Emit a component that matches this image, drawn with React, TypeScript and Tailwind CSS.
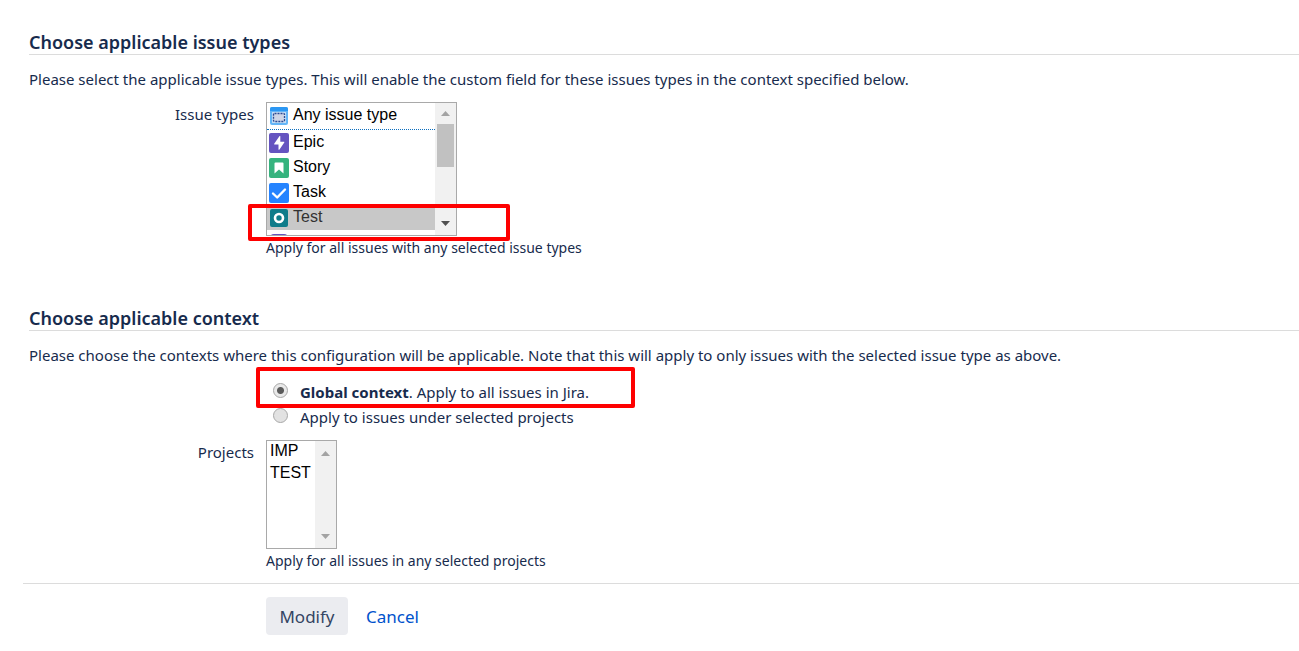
import React from 'react';

const ISSUE_TYPES = [
    { id: 'any', name: 'Any issue type' },
    { id: 'epic', name: 'Epic' },
    { id: 'story', name: 'Story' },
    { id: 'task', name: 'Task' },
    { id: 'test', name: 'Test' },
];

const AnyIcon: React.FC = () => (
    <svg width="18" height="18" viewBox="0 0 18 18">
        <rect width="18" height="18" rx="2" fill="#63b5f7" />
        <path d="M2 0h14a2 2 0 0 1 2 2v2H0V2a2 2 0 0 1 2-2z" fill="#2b97f3" />
        <rect x="2" y="5" width="14" height="11" fill="#c3dcf5" />
        <rect x="3.500" y="6.500" width="11" height="8" rx="1" fill="#cfd5e6" stroke="#2c4a94" strokeWidth="1.300" strokeDasharray="2 1" />
    </svg>
);

const EpicIcon: React.FC = () => (
    <svg width="20" height="20" viewBox="0 0 20 20">
        <rect width="20" height="20" rx="2" fill="#6554c0" />
        <path d="M11.3 3.5v5.2h3.5c.5 0 .7.5.5.8l-5 7.2c-.3.3-.8.2-.8-.3v-4.9H5.7c-.5 0-.7-.5-.5-.8l5.200-7.400c.3-.4.9-.3.9.2z" fill="#fff" />
    </svg>
);

const StoryIcon: React.FC = () => (
    <svg width="20" height="20" viewBox="0 0 20 20">
        <rect width="20" height="20" rx="2" fill="#36b37e" />
        <path d="M6.5 4.500h7a1 1 0 0 1 1 1V15.500L10 11.500 5.500 15.500V5.500a1 1 0 0 1 1-1z" fill="#fff" />
    </svg>
);

const TaskIcon: React.FC = () => (
    <svg width="20" height="20" viewBox="0 0 20 20">
        <rect width="20" height="20" rx="2" fill="#2684ff" />
        <path d="M4 10.500l4.200 4L16 6.500" fill="none" stroke="#fff" strokeWidth="2.400" strokeLinecap="round" strokeLinejoin="round" />
    </svg>
);

const TestIcon: React.FC = () => (
    <svg width="18" height="18" viewBox="0 0 18 18">
        <rect width="18" height="18" rx="2" fill="#0f7c8a" />
        <circle cx="9" cy="9" r="4" fill="none" stroke="#fff" strokeWidth="2.600" />
    </svg>
);

const Arrow: React.FC<{ down?: boolean; color: string }> = ({ down, color }) => (
    <svg width="9" height="5" viewBox="0 0 9 5">
        <path d={down ? 'M0 0h9L4.5 5z' : 'M0 5h9L4.5 0z'} fill={color} />
    </svg>
);

const Section: React.FC<{ title: string; text: string; children: React.ReactNode }> = ({ title, text, children }) => (
    <section className="pl-[6px]">
        <h2 className="border-b border-[#dcdcdc] pt-px text-[18px] leading-[23px] font-semibold">{title}</h2>
        <p className="pt-3 leading-6">{text}</p>
        {children}
    </section>
);

const App: React.FC = () => {
    return (
        <form
            className="bg-white pt-[30px] pb-4 pl-[23px] font-['Noto_Sans','Open_Sans',sans-serif] text-[15px] text-[#172b4d]"
            onSubmit={e => e.preventDefault()}
        >
            <Section
                title="Choose applicable issue types"
                text="Please select the applicable issue types. This will enable the custom field for these issues types in the context specified below."
            >
                <div className="flex items-start gap-3 pt-[11px]">
                    <label htmlFor="issue-types" className="w-[225px] text-right leading-6">Issue types</label>
                    <div>
                        <div className="relative w-[191px]">
                            <div className="flex h-[134px] overflow-hidden border border-[#a9a9a9]">
                                <select
                                    id="issue-types"
                                    multiple
                                    defaultValue={['test']}
                                    className="h-full min-w-0 flex-1 overflow-hidden bg-white p-0 font-['Liberation_Sans',Arial,sans-serif] text-[16px] text-black outline-none [scrollbar-width:none]"
                                >
                                    {ISSUE_TYPES.map(type => (
                                        <option
                                            key={type.id}
                                            value={type.id}
                                            className="h-[25px] pt-[3px] pr-0 pb-0 pl-[26px] first:h-[27px] first:border-b first:border-dotted first:border-[#0b6fc0] checked:bg-[linear-gradient(#c8c8c8,#c8c8c8)] checked:text-[#323232]"
                                        >
                                            {type.name}
                                        </option>
                                    ))}
                                </select>
                                <div className="flex w-[21px] flex-col items-center bg-[#f1f1f1]">
                                    <span className="flex h-[21px] items-center"><Arrow color="#a3a3a3" /></span>
                                    <span className="h-[43px] w-[17px] bg-[#c1c1c1]" />
                                    <span className="mt-auto flex h-6 items-center"><Arrow down color="#505050" /></span>
                                </div>
                            </div>
                            {/* option icons sit over the list's left padding */}
                            <div className="pointer-events-none absolute top-[5px] left-[3px] flex h-[128px] w-5 flex-col items-center overflow-hidden *:shrink-0">
                                <span className="h-[26px]"><AnyIcon /></span>
                                <span className="h-[25px]"><EpicIcon /></span>
                                <span className="h-[25px]"><StoryIcon /></span>
                                <span className="h-[26px]"><TaskIcon /></span>
                                <span className="h-[25px]"><TestIcon /></span>
                                <span className="h-1 w-[18px] rounded-t-sm bg-[#6554c0]" />
                            </div>
                            <div className="pointer-events-none absolute top-[102px] -right-[53px] -left-[18px] h-[37px] rounded-xs border-4 border-[#fe0000]" />
                        </div>
                        <p className="text-[14px] leading-6">Apply for all issues with any selected issue types</p>
                    </div>
                </div>
            </Section>

            <div className="h-[46px]" />

            <Section
                title="Choose applicable context"
                text="Please choose the contexts where this configuration will be applicable. Note that this will apply to only issues with the selected issue type as above."
            >
                <fieldset className="relative ml-[244px] w-max pt-[13px]">
                    <label className="flex h-[25px] items-center gap-3">
                        <input
                            type="radio"
                            name="context"
                            defaultChecked
                            className="-mt-1 size-[15px] appearance-none rounded-full border border-[#a8a8a8] bg-[#e9e9e9] checked:bg-[radial-gradient(circle,#5a5a5a_0_3px,#e9e9e9_4px)]"
                        />
                        <span><b>Global context</b>. Apply to all issues in Jira.</span>
                    </label>
                    <label className="flex h-[25px] items-center gap-3">
                        <input
                            type="radio"
                            name="context"
                            className="-mt-1 size-[15px] appearance-none rounded-full border border-[#a8a8a8] bg-[#e2e2e2] checked:bg-[radial-gradient(circle,#5a5a5a_0_3px,#e9e9e9_4px)]"
                        />
                        <span>Apply to issues under selected projects</span>
                    </label>
                    <div className="pointer-events-none absolute top-0 -left-[17px] h-[41px] w-[379px] rounded-xs border-4 border-[#fe0000]" />
                </fieldset>
                <div className="flex items-start gap-3 pt-[10px]">
                    <label htmlFor="projects" className="w-[225px] text-right leading-6">Projects</label>
                    <div>
                        <div className="flex h-[109px] w-[71px] overflow-hidden border border-[#a9a9a9]">
                            <select
                                id="projects"
                                multiple
                                className="h-full min-w-0 flex-1 overflow-hidden bg-white p-0 font-['Liberation_Sans',Arial,sans-serif] text-[16px] text-black outline-none [scrollbar-width:none]"
                            >
                                <option className="h-[22px] pt-px pr-0 pb-0 pl-[3px]">IMP</option>
                                <option className="h-[22px] pt-px pr-0 pb-0 pl-[3px]">TEST</option>
                            </select>
                            <div className="flex w-[21px] flex-col items-center justify-between bg-[#f1f1f1]">
                                <span className="flex h-6 items-center"><Arrow color="#a3a3a3" /></span>
                                <span className="flex h-6 items-center"><Arrow down color="#a3a3a3" /></span>
                            </div>
                        </div>
                        <p className="text-[14px] leading-6">Apply for all issues in any selected projects</p>
                    </div>
                </div>
            </Section>

            <div className="mt-[10px] flex items-center gap-[18px] border-t border-[#dcdcdc] pt-[13px] pl-[243px] text-[17px]">
                <button type="submit" className="h-[38px] w-[82px] rounded bg-[#ebecf0] pt-0.5 text-[#344563]">Modify</button>
                <a href="#cancel" className="pt-0.5 text-[#0052cc]">Cancel</a>
            </div>
        </form>
    );
};

export default App;
